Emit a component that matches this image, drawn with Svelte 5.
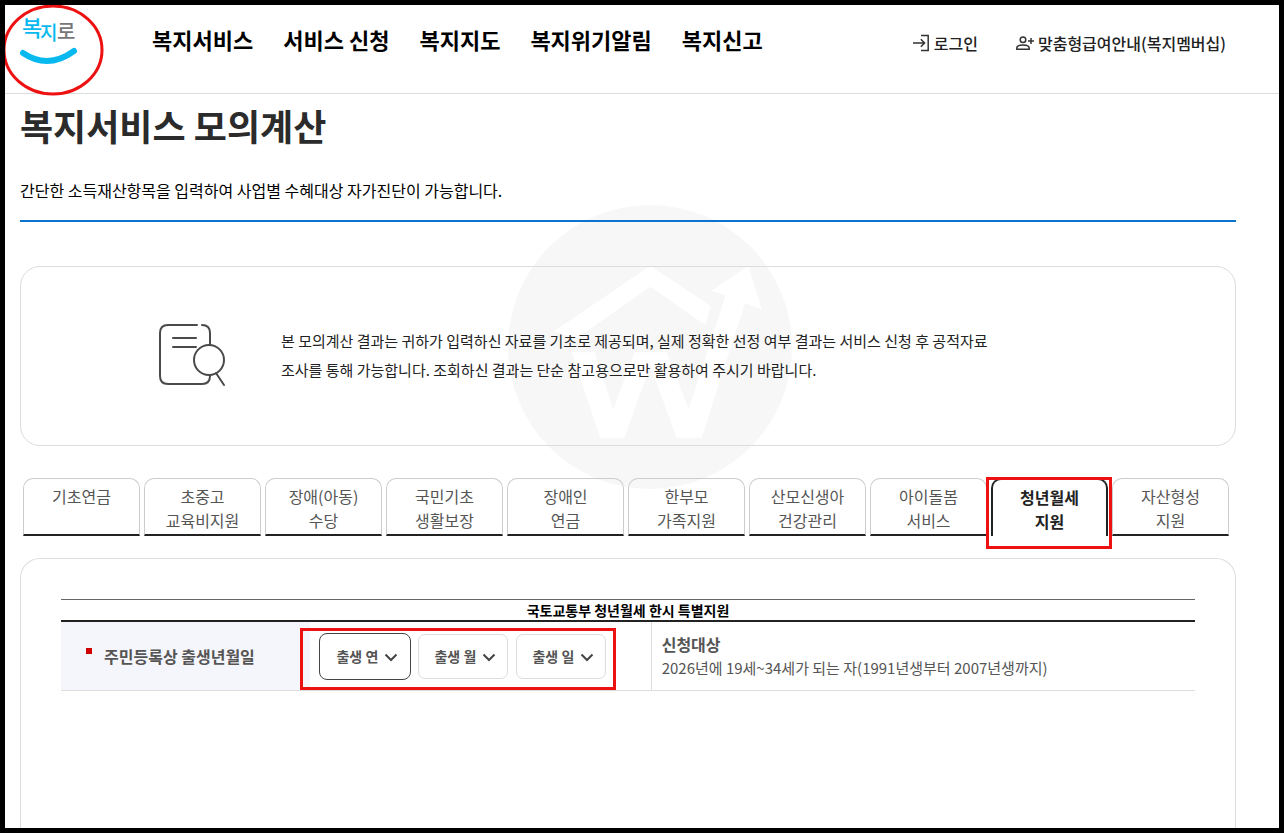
<script lang="ts">
  const menus = ['복지서비스', '서비스 신청', '복지지도', '복지위기알림', '복지신고'];

  const tabs = [
    ['기초연금'],
    ['초중고', '교육비지원'],
    ['장애(아동)', '수당'],
    ['국민기초', '생활보장'],
    ['장애인', '연금'],
    ['한부모', '가족지원'],
    ['산모신생아', '건강관리'],
    ['아이돌봄', '서비스'],
    ['청년월세', '지원'],
    ['자산형성', '지원']
  ];

  function range(from: number, to: number): number[] {
    return Array.from({ length: to - from + 1 }, (_, i) => from + i);
  }

  const selects = [
    { id: 'birth-year', label: '출생 연', options: range(1991, 2007) },
    { id: 'birth-month', label: '출생 월', options: range(1, 12) },
    { id: 'birth-day', label: '출생 일', options: range(1, 31) }
  ];

  let activeTab = $state(8);
  let activeSelect = $state('birth-year');
</script>

<div class="page">
  <header class="header">
    <a class="logo" href="#home" aria-label="복지로">
      <svg class="logo-image" viewBox="0 0 60 56" aria-hidden="true">
        <text class="logo-blue" x="3" y="22" font-size="22">복</text>
        <text class="logo-blue" x="21" y="26" font-size="19">지</text>
        <text class="logo-gray" x="38" y="25" font-size="20">로</text>
        <path d="M4 39 Q29 56 55 37" fill="none" stroke="#08b9f0" stroke-width="6" stroke-linecap="round" />
      </svg>
      <svg class="logo-ring" viewBox="0 0 102 92" aria-hidden="true">
        <ellipse cx="51" cy="46" rx="49" ry="44" fill="none" stroke="#ee1111" stroke-width="3" />
      </svg>
    </a>

    <nav class="menu">
      {#each menus as menu}
        <a href="#menu">{menu}</a>
      {/each}
    </nav>

    <div class="utils">
      <a href="#login">
        <svg viewBox="0 0 18 18" aria-hidden="true">
          <path d="M9 1.5h7.2v15H9M1 9h11.5M8.8 5.2 12.6 9l-3.8 3.8" />
        </svg>
        로그인
      </a>
      <a href="#membership">
        <svg viewBox="0 0 18 18" aria-hidden="true">
          <circle cx="7" cy="5.7" r="2.8" />
          <path d="M.8 15.3v-1.2c0-2 2.6-3.2 6.2-3.2s6.2 1.2 6.2 3.2v1.2zM15 4v6M12 7h6" />
        </svg>
        맞춤형급여안내(복지멤버십)
      </a>
    </div>
  </header>

  <main class="content">
    <!-- house + W + arrow watermark -->
    <svg class="watermark" viewBox="54 30 852 852" aria-hidden="true">
      <circle cx="480" cy="456" r="426" fill="#f7f7f7" />
      <g fill="#fff">
        <path d="M481 212 662 333 646 390 481 275 262 428 190 410z" />
        <path d="M245 472H314L370 642 434 472H530L596 642 707 300 663 288 775 212 815 343 765 325 635 728H560L481 512 403 728H330z" />
      </g>
    </svg>

    <h1>복지서비스 모의계산</h1>
    <p class="summary">간단한 소득재산항목을 입력하여 사업별 수혜대상 자가진단이 가능합니다.</p>

    <section class="notice">
      <svg class="notice-icon" viewBox="0 0 68 64" aria-hidden="true">
        <path d="M39 2H10Q2 2 2 10V53Q2 61 10 61H44Q52 61 52 53V52M44 2Q52 2 52 10V22M15 15H38M15 24H38M58 50 66 62" />
        <circle cx="51" cy="37" r="15" />
      </svg>
      <p>
        본 모의계산 결과는 귀하가 입력하신 자료를 기초로 제공되며, 실제 정확한 선정 여부 결과는 서비스 신청 후 공적자료<br />
        조사를 통해 가능합니다. 조회하신 결과는 단순 참고용으로만 활용하여 주시기 바랍니다.
      </p>
    </section>

    <div class="tabs" role="tablist">
      {#each tabs as lines, i}
        <button
          type="button"
          role="tab"
          class="tab"
          class:active={activeTab === i}
          aria-selected={activeTab === i}
          onclick={() => (activeTab = i)}
        >
          {#each lines as line}
            <span>{line}</span>
          {/each}
        </button>
      {/each}
    </div>

    <section class="panel">
      <table>
        <colgroup>
          <col class="col-label" />
          <col class="col-select" />
          <col />
        </colgroup>
        <thead>
          <tr>
            <th colspan="3">국토교통부 청년월세 한시 특별지원</th>
          </tr>
        </thead>
        <tbody>
          <tr>
            <th class="label-cell" scope="row">
              <span class="required">주민등록상 출생년월일</span>
            </th>
            <td>
              <div class="selects">
                {#each selects as item}
                  <div class="select-box" class:focused={activeSelect === item.id}>
                    <select id={item.id} aria-label={item.label} onfocus={() => (activeSelect = item.id)}>
                      <option value="">{item.label}</option>
                      {#each item.options as option}
                        <option value={option}>{option}</option>
                      {/each}
                    </select>
                    <svg viewBox="0 0 14 9" aria-hidden="true">
                      <path d="M1.500 1.500 7 7l5.500-5.500" />
                    </svg>
                  </div>
                {/each}
              </div>
            </td>
            <td class="target-cell">
              <strong>신청대상</strong>
              <p>2026년에 19세~34세가 되는 자(1991년생부터 2007년생까지)</p>
            </td>
          </tr>
        </tbody>
      </table>
    </section>
  </main>
</div>

<style>
  :global(body) {
    margin: 0;
    background: #000;
  }

  .page {
    box-sizing: border-box;
    display: flex;
    flex-direction: column;
    height: 100vh;
    min-height: 720px;
    border: 5px solid #000;
    background: #fff;
    overflow: hidden;
    font-family: 'Noto Sans CJK KR', 'Noto Sans', sans-serif;
    font-size: 16px;
    color: #000;
  }

  a {
    color: inherit;
    text-decoration: none;
  }

  p,
  h1 {
    margin: 0;
  }

  .header {
    display: flex;
    flex-shrink: 0;
    height: 88px;
    padding-right: 53px;
    border-bottom: 1px solid #ddd;
  }

  .logo {
    position: relative;
    z-index: 1;
    width: 147px;
  }

  .logo-image {
    display: block;
    width: 60px;
    height: 56px;
    margin: 9px 0 0 14px;
    overflow: visible;
  }

  .logo-image text {
    font-weight: 500;
  }

  .logo-blue {
    fill: #08b9f0;
  }

  .logo-gray {
    fill: #777;
  }

  .logo-ring {
    position: absolute;
    top: -1px;
    left: -3px;
    width: 102px;
    height: 92px;
  }

  .menu {
    display: flex;
    gap: 30px;
    font-size: 22px;
    font-weight: 700;
    line-height: 32px;
    padding-top: 18px;
    white-space: nowrap;
  }

  .utils {
    display: flex;
    gap: 38px;
    margin-left: auto;
    padding-top: 26px;
    font-weight: 500;
    line-height: 24px;
    white-space: nowrap;
    color: #222;
  }

  .utils a {
    display: flex;
    align-items: center;
    gap: 4px;
    height: 24px;
  }

  .utils svg {
    width: 18px;
    height: 18px;
    fill: none;
    stroke: #333;
    stroke-width: 1.5;
  }

  .content {
    position: relative;
    z-index: 0;
    display: flex;
    flex: 1;
    flex-direction: column;
    padding: 4px 43px 0 15px;
  }

  .watermark {
    position: absolute;
    z-index: -1;
    top: 111px;
    left: 503px;
    width: 284px;
    height: 284px;
  }

  h1 {
    font-size: 36px;
    font-weight: 700;
    line-height: 54px;
    color: #2b2b2b;
  }

  .summary {
    padding: 26px 0 18px;
    border-bottom: 2px solid #0a74cf;
    line-height: 24px;
  }

  .notice {
    box-sizing: border-box;
    display: flex;
    align-items: center;
    gap: 55px;
    min-height: 180px;
    margin-top: 44px;
    padding: 0 137px 2px;
    border: 1px solid #ddd;
    border-radius: 20px;
    font-size: 15px;
    line-height: 29px;
    color: #222;
    white-space: nowrap;
  }

  .notice-icon {
    flex-shrink: 0;
    width: 68px;
    height: 64px;
    fill: none;
    stroke: #4a4a4a;
    stroke-width: 2;
    stroke-linecap: round;
  }

  .tabs {
    display: grid;
    grid-template-columns: repeat(10, 1fr);
    gap: 4px;
    margin: 32px 7px 22px 3px;
  }

  .tab {
    position: relative;
    box-sizing: border-box;
    display: flex;
    flex-direction: column;
    align-items: center;
    height: 58px;
    padding: 5px 0 0;
    border: 1px solid #ccc;
    border-bottom: 2px solid #222;
    border-radius: 10px 10px 0 0;
    background: none;
    font: inherit;
    line-height: 24px;
    color: #555;
    white-space: nowrap;
    cursor: pointer;
  }

  .tab.active {
    border: 2px solid #222;
    border-bottom: 0;
    font-weight: 700;
    color: #222;
  }

  .tab.active::after {
    content: '';
    position: absolute;
    inset: -3px -6px -13px -7px;
    border: 3px solid #ee1111;
  }

  .panel {
    flex: 1;
    padding: 40px 40px 0;
    border: 1px solid #ddd;
    border-bottom: 0;
    border-radius: 20px 20px 0 0;
  }

  table {
    width: 100%;
    border-top: 1px solid #666;
    border-spacing: 0;
    table-layout: fixed;
    color: #555;
  }

  .col-label {
    width: 22%;
  }

  .col-select {
    width: 30%;
  }

  thead th {
    padding: 0;
    border-bottom: 2px solid #222;
    font-size: 14px;
    line-height: 20px;
    color: #000;
  }

  tbody th,
  tbody td {
    height: 68px;
    padding: 0;
    border-bottom: 1px solid #ddd;
    text-align: left;
  }

  tbody .label-cell {
    padding-left: 25px;
    background: #f5f6fc;
  }

  .required {
    display: flex;
    line-height: 24px;
  }

  .required::before {
    content: '';
    width: 6px;
    height: 6px;
    margin: 4px 12px 0 0;
    background: #d00000;
  }

  .selects {
    position: relative;
    display: flex;
    gap: 8px;
    width: max-content;
    margin-left: 10px;
  }

  .selects::after {
    content: '';
    position: absolute;
    inset: -6px -10px -11px -20px;
    border: 3px solid #ee1111;
    pointer-events: none;
  }

  .select-box {
    position: relative;
    box-sizing: border-box;
    width: 90px;
    height: 45px;
    border: 1px solid #ddd;
    border-radius: 7px;
    background: #fff;
  }

  .select-box.focused {
    border-color: transparent;
    outline: 1px solid #444;
  }

  .select-box select {
    width: 100%;
    height: 100%;
    padding: 0 0 0 15px;
    border: 0;
    outline: 0;
    background: none;
    appearance: none;
    font: inherit;
    font-size: 14px;
    font-weight: 700;
    color: #555;
  }

  .select-box svg {
    position: absolute;
    top: 18px;
    right: 11px;
    width: 14px;
    height: 9px;
    fill: none;
    stroke: #444;
    stroke-width: 2;
    pointer-events: none;
  }

  tbody .target-cell {
    padding-left: 10px;
    border-left: 1px solid #ddd;
    line-height: 24px;
  }

  .target-cell strong {
    display: block;
  }

  .target-cell p {
    font-size: 15px;
  }
</style>
